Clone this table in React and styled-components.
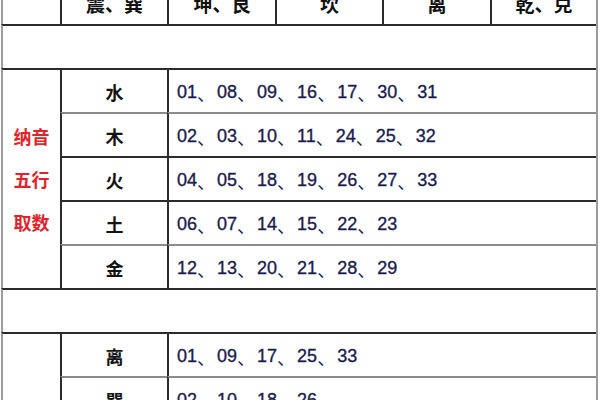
import React from "react";
import styled, { createGlobalStyle } from "styled-components";

const GlobalStyle = createGlobalStyle`
  html, body {
    margin: 0;
    padding: 0;
    background: #ffffff;
    overflow: hidden;
  }
`;

const LINE = "#2b2b2b";
const SOFT = "#8c8c8c";
const EDGE = "#9c9c9c";

const Sheet = styled.div`
  display: grid;
  grid-template-columns: 59px 107px 108px 107px 108px 106px;
  grid-auto-rows: 44px;
  width: max-content;
  margin: -20px 0 0 1px;
  border-right: 2px solid ${EDGE};
  background: #ffffff;
`;

const Cell = styled.div`
  box-sizing: border-box;
  grid-column: span ${(p) => p.$span || 1};
  grid-row: span ${(p) => p.$rows || 1};
  border-top: 2px solid ${(p) => (p.$soft ? SOFT : LINE)};
  border-left: 2px solid ${(p) => (p.$edge ? EDGE : LINE)};
  display: flex;
  align-items: center;
  justify-content: ${(p) => (p.$left ? "flex-start" : "center")};
  padding: ${(p) => (p.$head ? "0" : p.$left ? "3px 0 0 8px" : "2px 0 0 0")};
  font-family: "Noto Sans CJK SC", "Liberation Sans", sans-serif;
`;

const HeadText = styled.span`
  font-size: 19px;
  font-weight: 700;
  color: #111111;
`;

const Element = styled.span`
  font-size: 18px;
  font-weight: 700;
  color: #141414;
`;

const Label = styled.div`
  display: flex;
  flex-direction: column;
  align-items: center;
  font-size: 18px;
  font-weight: 700;
  line-height: 43px;
  color: #e2232b;
  margin-top: -2px;
`;

const Numbers = styled.div`
  display: flex;
  align-items: center;
  font-family: "Liberation Sans", Arial, sans-serif;
  font-size: 18px;
  color: #1c1c4c;
  -webkit-text-stroke: 0.35px #1c1c4c;
`;

const Sep = styled.span`
  display: inline-block;
  width: 20px;
  font-family: "Noto Sans CJK SC", sans-serif;
  font-size: 18px;
  line-height: 20px;
  -webkit-text-stroke: 0;
`;

const headers = ["震、巽", "坤、艮", "坎", "离", "乾、兑"];

const wuxing = [
  { name: "水", nums: ["01", "08", "09", "16", "17", "30", "31"] },
  { name: "木", nums: ["02", "03", "10", "11", "24", "25", "32"], soft: true },
  { name: "火", nums: ["04", "05", "18", "19", "26", "27", "33"] },
  { name: "土", nums: ["06", "07", "14", "15", "22", "23"] },
  { name: "金", nums: ["12", "13", "20", "21", "28", "29"], soft: true },
];

const gua = [
  { name: "离", nums: ["01", "09", "17", "25", "33"] },
  { name: "巽", nums: ["02", "10", "18", "26"], soft: true },
];

const NumberList = ({ nums }) => (
  <Numbers>
    {nums.map((n, i) => (
      <React.Fragment key={n}>
        <span>{n}</span>
        {i < nums.length - 1 && <Sep>、</Sep>}
      </React.Fragment>
    ))}
  </Numbers>
);

const Rows = ({ items }) =>
  items.map((row) => (
    <React.Fragment key={row.name}>
      <Cell $soft={row.soft}>
        <Element>{row.name}</Element>
      </Cell>
      <Cell $span={4} $soft={row.soft} $left>
        <NumberList nums={row.nums} />
      </Cell>
    </React.Fragment>
  ));

export default function App() {
  return (
    <>
      <GlobalStyle />
      <Sheet>
        <Cell $edge $head />
        {headers.map((h) => (
          <Cell key={h} $head>
            <HeadText>{h}</HeadText>
          </Cell>
        ))}

        <Cell $span={6} $edge />

        <Cell $edge $rows={5}>
          <Label>
            <span>纳音</span>
            <span>五行</span>
            <span>取数</span>
          </Label>
        </Cell>
        <Rows items={wuxing} />

        <Cell $span={6} $edge />

        <Cell $edge $rows={2} />
        <Rows items={gua} />
      </Sheet>
    </>
  );
}
